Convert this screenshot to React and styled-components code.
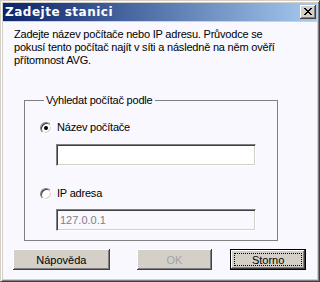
import React from "react";
import styled, { createGlobalStyle } from "styled-components";

const GlobalStyle = createGlobalStyle`
  html, body {
    margin: 0;
    padding: 0;
    background: #d4d0c8;
  }
  * {
    box-sizing: border-box;
  }
`;

const Window = styled.div`
  width: 320px;
  height: 282px;
  display: flex;
  flex-direction: column;
  padding: 2px;
  background: #d4d0c8;
  border: 1px solid;
  border-color: #d4d0c8 #404040 #404040 #d4d0c8;
  box-shadow: inset 1px 1px #fff, inset -1px -1px #808080;
  font-family: "Liberation Sans", Arial, sans-serif;
  font-size: 11px;
  color: #000;
`;

const TitleBar = styled.div`
  height: 18px;
  flex-shrink: 0;
  display: flex;
  align-items: center;
  justify-content: space-between;
  padding: 0 1px 0 2px;
  background: linear-gradient(to right, #0a246a, #a6caf0);

  h1 {
    margin: 0;
    font-family: "DejaVu Sans", Verdana, sans-serif;
    font-size: 12px;
    font-weight: bold;
    letter-spacing: 0.5px;
    line-height: 18px;
    color: #fff;
  }
`;

const CloseButton = styled.div`
  width: 16px;
  height: 14px;
  display: flex;
  align-items: center;
  justify-content: center;
  padding: 0 1px 1px 0;
  background: #d4d0c8;
  box-shadow: inset -1px -1px #404040, inset 1px 1px #fff,
    inset -2px -2px #808080, inset 2px 2px #d4d0c8;

  svg {
    display: block;
  }
`;

const Client = styled.div`
  flex: 1;
  margin-top: 1px;
  padding: 6px 11px 0 11px;
  display: flex;
  flex-direction: column;
  background: #f8f8fe;
`;

const Intro = styled.p`
  margin: 0;
  line-height: 13px;
  letter-spacing: -0.2px;
  white-space: nowrap;
`;

const Group = styled.fieldset`
  margin: 27px 0 0 10px;
  width: 254px;
  padding: 14px 0 9px 15px;
  border: 1px solid #808080;
  display: flex;
  flex-direction: column;

  legend {
    margin-left: 4px;
    padding: 0 2px;
    line-height: 13px;
    letter-spacing: -0.2px;
  }
`;

const Option = styled.div`
  display: flex;
  flex-direction: column;
  margin-top: ${(p) => (p.$first ? "0" : "21px")};
`;

const OptionRow = styled.label`
  display: flex;
  align-items: center;
  gap: 5px;
  height: 13px;
  line-height: 13px;
  letter-spacing: -0.2px;
`;

const Radio = styled.span`
  position: relative;
  width: 12px;
  height: 12px;
  border-radius: 50%;
  background: #fff;
  border: 1px solid;
  border-color: #808080 #fff #fff #808080;
  box-shadow: inset 1px 1px #404040, inset -1px -1px #d4d0c8;

  &::after {
    content: "";
    display: ${(p) => (p.$checked ? "block" : "none")};
    position: absolute;
    left: 3px;
    top: 3px;
    width: 4px;
    height: 4px;
    border-radius: 50%;
    background: #000;
  }
`;

const Edit = styled.div`
  width: 200px;
  height: 22px;
  margin: ${(p) => (p.$gap || 10)}px 0 0 16px;
  padding: 0 3px;
  display: flex;
  align-items: center;
  background: ${(p) => (p.$disabled ? "#f8f8fe" : "#fff")};
  color: ${(p) => (p.$disabled ? "#808080" : "#000")};
  border: 1px solid;
  border-color: #808080 #fff #fff #808080;
  box-shadow: inset 1px 1px #404040, inset -1px -1px #d4d0c8;
`;

const ButtonRow = styled.div`
  display: flex;
  margin: 8px 0 0 -1px;
`;

const Button = styled.div`
  position: relative;
  width: ${(p) => p.$w}px;
  height: 21px;
  margin-left: ${(p) => p.$ml || 0}px;
  display: flex;
  align-items: center;
  justify-content: center;
  background: #d4d0c8;
  color: ${(p) => (p.$disabled ? "#a3a3a3" : "#000")};
  box-shadow: inset -1px -1px #404040, inset 1px 1px #fff,
    inset -2px -2px #808080, inset 2px 2px #d4d0c8;

  ${(p) =>
    p.$default &&
    `
    border: 1px solid #000;
    box-shadow: inset -1px -1px #404040, inset 1px 1px #fff,
      inset -2px -2px #808080;
    &::after {
      content: "";
      position: absolute;
      inset: 3px 3px 3px 3px;
      border: 1px dotted #000;
    }
  `}
`;

const CloseGlyph = () => (
  <svg width="8" height="7" viewBox="0 0 8 7" shapeRendering="crispEdges">
    <path
      fill="#000"
      d="M0 0h2v1H0zM6 0h2v1H6zM1 1h2v1H1zM5 1h2v1H5zM2 2h4v1H2zM3 3h2v1H3zM2 4h4v1H2zM1 5h2v1H1zM5 5h2v1H5zM0 6h2v1H0zM6 6h2v1H6z"
    />
  </svg>
);

export default function App() {
  return (
    <>
      <GlobalStyle />
      <Window>
        <TitleBar>
          <h1>Zadejte stanici</h1>
          <CloseButton>
            <CloseGlyph />
          </CloseButton>
        </TitleBar>
        <Client>
          <Intro>
            Zadejte název počítače nebo IP adresu. Průvodce se
            <br />
            pokusí tento počítač najít v síti a následně na něm ověří
            <br />
            přítomnost AVG.
          </Intro>
          <Group>
            <legend>Vyhledat počítač podle</legend>
            <Option $first>
              <OptionRow>
                <Radio $checked />
                Název počítače
              </OptionRow>
              <Edit />
            </Option>
            <Option>
              <OptionRow>
                <Radio />
                IP adresa
              </OptionRow>
              <Edit $disabled $gap={9}>
                127.0.0.1
              </Edit>
            </Option>
          </Group>
          <ButtonRow>
            <Button $w={97}>Nápověda</Button>
            <Button $w={76} $ml={27} $disabled>
              OK
            </Button>
            <Button $w={76} $ml={18} $default>
              Storno
            </Button>
          </ButtonRow>
        </Client>
      </Window>
    </>
  );
}
